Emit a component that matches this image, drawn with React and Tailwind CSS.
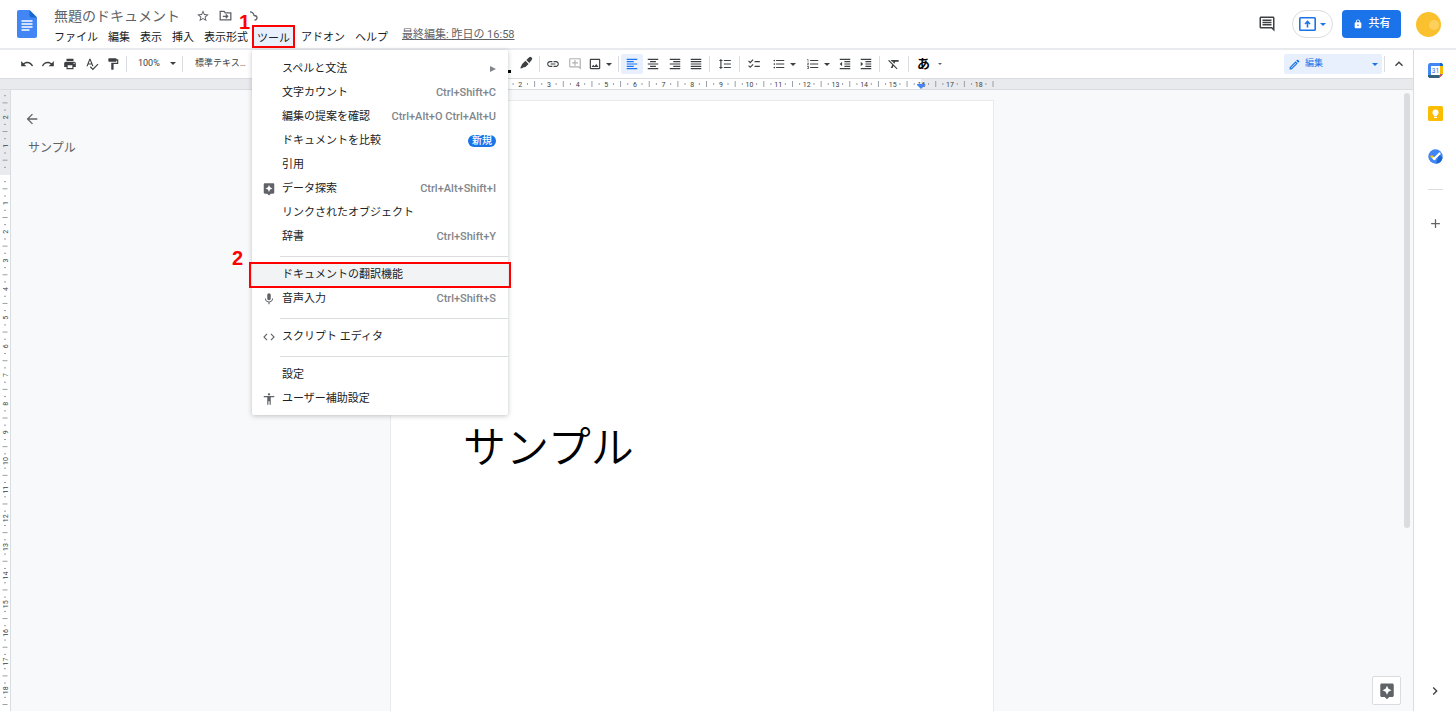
import React from "react";
import {
  MdStarBorder, MdPrint, MdSpellcheck, MdFormatPaint,
  MdLink, MdOutlineAddComment, MdOutlineImage, MdFormatAlignLeft, MdFormatAlignCenter,
  MdFormatAlignRight, MdFormatAlignJustify, MdFormatLineSpacing, MdChecklist,
  MdFormatListBulleted, MdFormatListNumbered, MdFormatIndentDecrease, MdFormatIndentIncrease,
  MdFormatClear, MdOutlineEdit, MdExpandLess, MdArrowBack, MdAssistant, MdMic, MdCode,
  MdAccessibility, MdChevronRight, MdAdd, MdLock, MdOutlineInsertComment, MdUndo, MdRedo,
} from "react-icons/md";

const CM = 28.65;

function Caret({ className = "" }) {
  return (
    <svg viewBox="0 0 6 3" className={`h-[3px] w-[6px] shrink-0 ${className}`} fill="currentColor" aria-hidden="true">
      <path d="M0 0h6L3 3z" />
    </svg>
  );
}

function Sep() {
  return (
    <div className="flex w-[5px] shrink-0 justify-center">
      <div className="h-4 w-px bg-[#dadce0]" />
    </div>
  );
}

function Tool({ label, active, className = "flex-1", children }) {
  return (
    <button
      type="button"
      aria-label={label}
      className={`flex h-5 items-center justify-center rounded-xs text-[14px] ${active ? "bg-[#e8f0fe] text-[#1a73e8]" : "text-[#3c4043]"} ${className}`}
    >
      {children}
    </button>
  );
}

function SplitTool({ label, className = "w-[34px]", children }) {
  return (
    <button type="button" aria-label={label} className={`flex h-5 items-center justify-end gap-1 pr-1 text-[14px] text-[#3c4043] ${className}`}>
      {children}
      <Caret />
    </button>
  );
}

function FolderMove() {
  return (
    <svg viewBox="0 0 24 24" className="size-[13px]" fill="none" stroke="currentColor" strokeWidth="2.4" aria-hidden="true">
      <path d="M2.2 4.500h7.300l2 2.500h10.300V20H2.200z" />
      <path d="M7 13.500h9M12.500 10l3.500 3.500-3.500 3.500" />
    </svg>
  );
}

function DocsLogo() {
  return (
    <svg viewBox="0 0 20 28" className="h-7 w-5" role="img" aria-label="Docs">
      <path d="M2 0h10.5L20 7.5V26a2 2 0 0 1-2 2H2a2 2 0 0 1-2-2V2a2 2 0 0 1 2-2z" fill="#4285f4" />
      <path d="M12.5 0 20 7.5h-5.5a2 2 0 0 1-2-2z" fill="#1967d2" />
      <path d="M4.5 11h11M4.5 14h11M4.5 17h11M4.5 20h8" stroke="#fff" strokeWidth="1.4" />
    </svg>
  );
}

function Highlighter() {
  return (
    <svg viewBox="0 0 24 24" className="size-[14px] -translate-y-px" fill="currentColor" aria-hidden="true">
      <path d="M2 21l3.5-7.5L11 8l5.5 5.5L11 19l-4 .5L5.500 21z" />
      <path d="M12.500 6.800 17.500 2q1.800-1.500 3.500 0l1 1q1.500 1.800 0 3.500L17.700 12z" />
    </svg>
  );
}

function CalendarLogo() {
  return (
    <svg viewBox="0 0 15 15" className="size-[15px]" aria-hidden="true">
      <path d="M1.500 0h12L15 1.500V11l-4 4H1.500L0 13.500v-12z" fill="#4285f4" />
      <path d="M12 3h3v8h-3z" fill="#fbbc04" />
      <path d="M2 12h9v3H1.500L0 13.500V12z" fill="#34627b" />
      <path d="M11 11.500h4L11 15z" fill="#ea4335" />
      <path d="M12 0h1.500L15 1.500V3h-3z" fill="#1967d2" />
      <path d="M3 3h9v9H3z" fill="#fff" />
      <text x="7.500" y="10" fontSize="6.500" textAnchor="middle" fill="#1a73e8" fontFamily="Roboto, sans-serif">31</text>
    </svg>
  );
}

function KeepLogo() {
  return (
    <svg viewBox="0 0 15 15" className="size-[15px]" aria-hidden="true">
      <rect width="15" height="15" rx="1.500" fill="#fbbc04" />
      <circle cx="7.500" cy="6.500" r="3" fill="#fff" />
      <path d="M6 8h3v2H6zM6 10.700h3v1.200H6z" fill="#fff" />
    </svg>
  );
}

function TasksLogo() {
  return (
    <svg viewBox="0 0 15 15" className="size-[15px]" aria-hidden="true">
      <circle cx="7.500" cy="7.500" r="7.200" fill="#4285f4" />
      <path d="M8 14.700a7.200 7.200 0 0 0 6.600-6.200L11 6z" fill="#1967d2" />
      <path d="M6.300 9.800l5.300-5.300" stroke="#fff" strokeWidth="2.200" strokeLinecap="round" />
      <path d="M4.600 8.300l1.900 1.800" stroke="#fff" strokeWidth="2.200" strokeLinecap="round" />
      <circle cx="3.800" cy="7.600" r="1.400" fill="#fbbc04" />
    </svg>
  );
}

function TopRuler() {
  const marks = [];
  for (let q = 7; q <= 74; q++) {
    const x = 463 + (q * CM) / 4;
    if (q % 4 === 0) {
      marks.push(
        <text key={q} x={x} y="7.500" fontSize="7" textAnchor="middle" fill="#3c4043" fontFamily="Roboto, sans-serif">{q / 4}</text>
      );
    } else if (q % 4 === 2) {
      marks.push(<path key={q} d={`M${x} 2v6`} stroke="#9aa0a6" strokeWidth="1" />);
    } else {
      marks.push(<path key={q} d={`M${x} 4v2`} stroke="#9aa0a6" strokeWidth="1" />);
    }
  }
  return (
    <div className="h-3 shrink-0 overflow-hidden border-y border-[#dadce0] bg-[#e8eaed]">
      <svg className="block h-3 w-[1010px]" viewBox="0 0 1010 12" aria-hidden="true">
        <rect x="463" width="458" height="12" fill="#fff" />
        {marks}
        <path d="M917 5h8v1l-4 4-4-4z" fill="#4285f4" />
      </svg>
    </div>
  );
}

function SideRuler() {
  const marks = [];
  for (let q = -11; q <= 75; q++) {
    const y = 84.500 + (q * CM) / 4;
    if (q === 0) continue;
    if (q % 4 === 0) {
      marks.push(
        <text key={q} x="0" y="0" transform={`translate(8 ${y}) rotate(-90)`} fontSize="7" textAnchor="middle" fill="#3c4043" fontFamily="Roboto, sans-serif">{Math.abs(q / 4)}</text>
      );
    } else if (q % 2 === 0) {
      marks.push(<path key={q} d={`M2.500 ${y}h5`} stroke="#9aa0a6" strokeWidth="1" />);
    } else {
      marks.push(<path key={q} d={`M4 ${y}h2`} stroke="#9aa0a6" strokeWidth="1" />);
    }
  }
  return (
    <div className="relative w-[11px] shrink-0 border-r border-[#dadce0] bg-white">
      <svg className="absolute inset-x-0 top-0 h-full w-[10px]" aria-hidden="true">
        <rect width="10" height="85" fill="#e8eaed" />
        {marks}
      </svg>
    </div>
  );
}

const TOOL_MENU = [
  [
    { label: "スペルと文法", sub: true },
    { label: "文字カウント", keys: "Ctrl+Shift+C" },
    { label: "編集の提案を確認", keys: "Ctrl+Alt+O Ctrl+Alt+U" },
    { label: "ドキュメントを比較", badge: "新規" },
    { label: "引用" },
    { label: "データ探索", keys: "Ctrl+Alt+Shift+I", icon: MdAssistant },
    { label: "リンクされたオブジェクト" },
    { label: "辞書", keys: "Ctrl+Shift+Y" },
  ],
  [
    { label: "ドキュメントの翻訳機能", marked: true },
    { label: "音声入力", keys: "Ctrl+Shift+S", icon: MdMic },
  ],
  [{ label: "スクリプト エディタ", icon: MdCode }],
  [{ label: "設定" }, { label: "ユーザー補助設定", icon: MdAccessibility }],
];

function MenuItem({ item }) {
  const Icon = item.icon;
  return (
    <button
      type="button"
      role="menuitem"
      className={`relative flex h-6 w-full items-center pr-3 pl-2.5 text-left text-[11px] text-[#202124] ${item.marked ? "bg-[#f1f3f4]" : ""}`}
    >
      <span className="flex w-5 shrink-0 text-[14px] text-[#5f6368]">{Icon && <Icon />}</span>
      <span className="flex-1 whitespace-nowrap">{item.label}</span>
      {item.keys && <span className="font-medium whitespace-nowrap text-[#80868b]">{item.keys}</span>}
      {item.badge && (
        <span className="rounded-full bg-[#1a73e8] px-1 text-[10px] leading-3 font-medium text-white">{item.badge}</span>
      )}
      {item.sub && (
        <svg viewBox="0 0 6 6" className="size-[6px] text-[#80868b]" fill="currentColor" aria-hidden="true">
          <path d="M0 0l6 3-6 3z" />
        </svg>
      )}
      {item.marked && (
        <>
          <span className="absolute -inset-x-[3px] -inset-y-px border-2 border-[#f00]" />
          <span className="absolute -top-[17px] -left-5 font-['Liberation_Sans',sans-serif] text-[20px] leading-6 font-bold text-[#f00]">2</span>
        </>
      )}
    </button>
  );
}

function ToolsMenu() {
  return (
    <div role="menu" className="absolute top-[25px] left-0 z-20 w-64 rounded-xs bg-white pt-[7px] pb-1 shadow-[0_1px_5px_rgba(60,64,67,0.3)]">
      {TOOL_MENU.map((group, i) => (
        <React.Fragment key={i}>
          {i > 0 && <div className="mt-[7px] mb-1.5 ml-7 h-px bg-[#dadce0]" />}
          {group.map((item) => <MenuItem key={item.label} item={item} />)}
        </React.Fragment>
      ))}
    </div>
  );
}

function MenuButton({ children }) {
  return <button type="button" className="h-[23px] px-[5px] pt-1 whitespace-nowrap">{children}</button>;
}

function Header() {
  return (
    <header className="flex h-[50px] shrink-0 items-start justify-between border-b-2 border-[#e8eaed] pr-[15px] pl-[17px]">
      <div className="flex">
        <a href="#home" className="pt-[10px]"><DocsLogo /></a>
        <div className="ml-3">
          <div className="flex h-[25px] items-center pt-1.5 pl-[5px] text-[#5f6368]">
            <h1 className="text-[14px] leading-4">無題のドキュメント</h1>
            <button type="button" aria-label="スター" className="ml-4 text-[14px]"><MdStarBorder /></button>
            <button type="button" aria-label="移動" className="ml-[9px]"><FolderMove /></button>
            <span className="ml-[7px] pt-3 font-['Liberation_Sans',sans-serif] text-[20px] leading-4 font-bold text-[#f00]">1</span>
            <svg viewBox="0 0 8 10" className="h-[10px] w-2" fill="none" stroke="currentColor" strokeWidth="1.300" aria-hidden="true">
              <path d="M0 .8Q3.500 1 4 4.500q3 .2 3 2.300T4.500 9" />
            </svg>
          </div>
          <nav className="flex items-start text-[11px] text-[#202124]">
            <MenuButton>ファイル</MenuButton>
            <MenuButton>編集</MenuButton>
            <MenuButton>表示</MenuButton>
            <MenuButton>挿入</MenuButton>
            <MenuButton>表示形式</MenuButton>
            <div className="relative mr-px -ml-px">
              <button type="button" aria-expanded="true" className="h-[23px] border-2 border-[#f00] bg-[#e8f0fe] px-[3px] pt-1 whitespace-nowrap">ツール</button>
              <ToolsMenu />
            </div>
            <MenuButton>アドオン</MenuButton>
            <MenuButton>ヘルプ</MenuButton>
            <a href="#history" className="ml-[9px] text-[11px] leading-5 whitespace-nowrap text-[#5f6368] underline">最終編集: 昨日の 16:58</a>
          </nav>
        </div>
      </div>
      <div className="flex items-center pt-[10px]">
        <button type="button" aria-label="コメント履歴" className="text-[18px] text-[#3c4043]"><MdOutlineInsertComment /></button>
        <button type="button" aria-label="画面共有" className="ml-4 flex h-7 w-[41px] items-center justify-center gap-1 rounded-full border border-[#dadce0] text-[#1a73e8]">
          <svg viewBox="0 0 17 14" className="h-[14px] w-[17px]" fill="none" stroke="currentColor" strokeWidth="1.600" aria-hidden="true">
            <rect x=".8" y=".8" width="15.400" height="12.400" rx=".8" />
            <path d="M8.500 10.500V5M6 7l2.500-2.500L11 7" />
          </svg>
          <Caret />
        </button>
        <button type="button" className="ml-[9px] flex h-7 w-[59px] items-center justify-center gap-1.5 rounded-sm bg-[#1a73e8] text-[11px] font-medium text-white">
          <MdLock className="text-[10px]" />共有
        </button>
        <svg viewBox="0 0 25 25" className="ml-[15px] size-[25px]" role="img" aria-label="アカウント">
          <circle cx="12.500" cy="12.500" r="12.500" fill="#fbc02d" />
          <circle cx="18" cy="13" r="5" fill="#fdd05c" />
        </svg>
      </div>
    </header>
  );
}

function Toolbar() {
  return (
    <div className="flex h-7 shrink-0 items-center pl-4">
      <div className="flex w-[108px] shrink-0">
        <Tool label="元に戻す"><MdUndo /></Tool>
        <Tool label="やり直し"><MdRedo /></Tool>
        <Tool label="印刷"><MdPrint /></Tool>
        <Tool label="スペルチェック"><MdSpellcheck /></Tool>
        <Tool label="書式を貼り付け"><MdFormatPaint /></Tool>
      </div>
      <Sep />
      <button type="button" className="flex h-5 w-[51px] shrink-0 items-center justify-between pr-1 pb-px pl-[9px] text-[9px] text-[#3c4043]">100%<Caret /></button>
      <Sep />
      <button type="button" className="h-5 w-[310px] shrink-0 pb-px pl-[10px] text-left text-[9px] text-[#3c4043]">標準テキス…</button>
      <Tool label="テキストの色" className="w-[19px]"><span className="mt-[14px] h-[3px] w-[13px] bg-black" /></Tool>
      <Tool label="ハイライトの色" className="w-[23px]"><Highlighter /></Tool>
      <Sep />
      <Tool label="リンク" className="w-[22px]"><MdLink /></Tool>
      <Tool label="コメントを追加" className="w-[22px] opacity-40"><MdOutlineAddComment /></Tool>
      <SplitTool label="画像" className="w-[30px]"><MdOutlineImage /></SplitTool>
      <Sep />
      <div className="flex w-[86px] shrink-0">
        <Tool label="左揃え" active><MdFormatAlignLeft /></Tool>
        <Tool label="中央揃え"><MdFormatAlignCenter /></Tool>
        <Tool label="右揃え"><MdFormatAlignRight /></Tool>
        <Tool label="両端揃え"><MdFormatAlignJustify /></Tool>
      </div>
      <Sep />
      <Tool label="行間" className="w-[25px]"><MdFormatLineSpacing /></Tool>
      <Sep />
      <Tool label="チェックリスト" className="w-[23px]"><MdChecklist /></Tool>
      <SplitTool label="箇条書き" className="w-[35px]"><MdFormatListBulleted /></SplitTool>
      <SplitTool label="番号付きリスト" className="w-[34px]"><MdFormatListNumbered /></SplitTool>
      <Tool label="インデント減" className="w-[21px]"><MdFormatIndentDecrease /></Tool>
      <Tool label="インデント増" className="w-[22px]"><MdFormatIndentIncrease /></Tool>
      <Sep />
      <Tool label="書式をクリア" className="w-[24px]"><MdFormatClear /></Tool>
      <Sep />
      <button type="button" aria-label="入力ツール" className="flex h-5 items-center gap-2 pl-1.5 text-[13px] leading-5 font-bold text-black">
        あ<svg viewBox="0 0 6 3" className="h-[2px] w-1 text-[#5f6368]" fill="currentColor"><path d="M0 0h6L3 3z" /></svg>
      </button>
      <div className="ml-auto flex items-center pr-1.5">
        <button type="button" className="flex h-5 w-[98px] items-center rounded-xs bg-[#e8f0fe] px-1 text-[9px] text-[#1a73e8]">
          <MdOutlineEdit className="text-[13px]" />
          <span className="ml-1">編集</span>
          <Caret className="ml-auto" />
        </button>
        <Sep />
        <button type="button" aria-label="メニューを非表示" className="ml-1 text-[16px] text-[#3c4043]"><MdExpandLess /></button>
      </div>
    </div>
  );
}

export default function App() {
  return (
    <div className="flex h-screen flex-col overflow-hidden bg-white font-[Roboto,'Noto_Sans_CJK_JP',sans-serif] text-[#202124]">
      <Header />
      <div className="flex min-h-0 flex-1">
        <main className="flex min-w-0 flex-1 flex-col">
          <Toolbar />
          <TopRuler />
          <div className="flex min-h-0 flex-1 bg-[#f8f9fa]">
            <SideRuler />
            <section className="w-[379px] shrink-0 pt-[21px] pl-[13px] text-[#5f6368]">
              <button type="button" aria-label="概要を閉じる" className="block text-[16px]"><MdArrowBack /></button>
              <a href="#sample" className="mt-[11px] block pl-1 text-[12px] leading-5">サンプル</a>
            </section>
            <article className="mt-[10px] w-[604px] shrink-0 border border-b-0 border-[#e8eaed] bg-white px-[72px] pt-[315px]">
              <h2 className="text-[43px] leading-16 font-[350] text-black">サンプル</h2>
            </article>
            <div className="flex min-w-0 flex-1 items-end justify-end pr-[2px] pb-1.5">
              <button type="button" aria-label="データ探索" className="flex size-[29px] items-center justify-center rounded-xs border border-[#dadce0] bg-white text-[18px] text-[#5f6368]"><MdAssistant /></button>
            </div>
            <div className="w-[10px] shrink-0 pt-[3px]">
              <div className="ml-px h-[435px] w-1.5 rounded-full bg-[#dadce0]" />
            </div>
          </div>
        </main>
        <aside className="flex w-[43px] shrink-0 flex-col items-center border-l border-[#dadce0] pt-[13px] pb-3">
          <button type="button" aria-label="カレンダー"><CalendarLogo /></button>
          <button type="button" aria-label="Keep" className="mt-7"><KeepLogo /></button>
          <button type="button" aria-label="ToDo リスト" className="mt-7"><TasksLogo /></button>
          <div className="mt-[25px] h-px w-[15px] bg-[#dadce0]" />
          <button type="button" aria-label="アドオンを取得" className="mt-[26px] text-[15px] text-[#5f6368]"><MdAdd /></button>
          <button type="button" aria-label="サイドパネルを非表示" className="mt-auto text-[16px] text-[#3c4043]"><MdChevronRight /></button>
        </aside>
      </div>
    </div>
  );
}
